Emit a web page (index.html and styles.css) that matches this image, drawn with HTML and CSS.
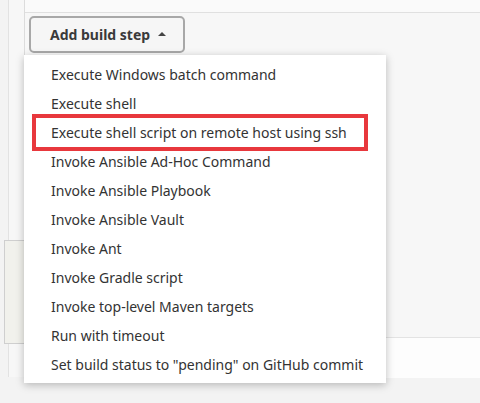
FILE: index.html
```html
<!DOCTYPE html>
<html>
<head>
<meta charset="utf-8">
<link rel="stylesheet" href="styles.css">
</head>
<body>
<div class="page">
  <div class="section">
    <div class="section-top"></div>
    <div class="section-body">
      <button class="add-btn">Add build step <span class="caret"></span></button>
    </div>
  </div>
  <div class="lower-left"></div>
  <div class="lower-right"></div>

  <div class="menu">
    <div class="item">Execute Windows batch command</div>
    <div class="item">Execute shell</div>
    <div class="item">Execute shell script on remote host using ssh</div>
    <div class="item">Invoke Ansible Ad-Hoc Command</div>
    <div class="item">Invoke Ansible Playbook</div>
    <div class="item">Invoke Ansible Vault</div>
    <div class="item">Invoke Ant</div>
    <div class="item">Invoke Gradle script</div>
    <div class="item">Invoke top-level Maven targets</div>
    <div class="item">Run with timeout</div>
    <div class="item">Set build status to "pending" on GitHub commit</div>
    <div class="highlight"></div>
  </div>
</div>
</body>
</html>
```
FILE: styles.css
```css
html, body {
  margin: 0;
  padding: 0;
}
body {
  width: 480px;
  height: 403px;
  overflow: hidden;
  background: #f3f3f3;
  font-family: "Noto Sans", "Open Sans", sans-serif;
  color: #333;
}
.page {
  position: relative;
  margin-left: 8px;
  height: 377px;
  border-left: 1px solid #e2e2e2;
  background: #f7f7f7;
}
.section {
  margin-left: 15px;
  border-left: 1px solid #dcdcdc;
  height: 330px;
}
.section-top {
  height: 12px;
  background: #fafafa;
  border-bottom: 1px solid #e0e0e0;
}
.section-body {
  padding: 3px 0 0 4px;
}
.add-btn {
  display: flex;
  align-items: center;
  gap: 8px;
  width: 156px;
  height: 37px;
  padding: 0 0 0 19px;
  border: 2px solid #a8a8a8;
  border-radius: 5px;
  background: #f6f6f6;
  font-family: "Noto Sans", "Open Sans", sans-serif;
  font-weight: 700;
  font-size: 14px;
  color: #3a3a3a;
}
.caret {
  width: 0;
  height: 0;
  border-left: 4px solid transparent;
  border-right: 4px solid transparent;
  border-bottom: 4px solid #444;
  margin-top: -2px;
}
.lower-left {
  position: absolute;
  left: -5px;
  top: 240px;
  width: 19px;
  height: 102px;
  border: 1px solid #cfcfcf;
  background: #f1f1ec;
}
.lower-right {
  position: absolute;
  left: 370px;
  top: 337px;
  right: 0;
  height: 40px;
  border-top: 1px solid #e3e3e3;
  background: #fdfdfd;
}
.menu {
  position: absolute;
  left: 15px;
  top: 55px;
  width: 362px;
  padding: 5px 0 4px;
  background: #fff;
  box-shadow: 0 2px 8px rgba(0, 0, 0, 0.25);
}
.item {
  height: 29px;
  line-height: 29px;
  padding-left: 27px;
  font-size: 14px;
  color: #333;
  white-space: nowrap;
}
.highlight {
  position: absolute;
  left: 8px;
  top: 59px;
  width: 328px;
  height: 29px;
  border: 4px solid #e8383d;
}
```
